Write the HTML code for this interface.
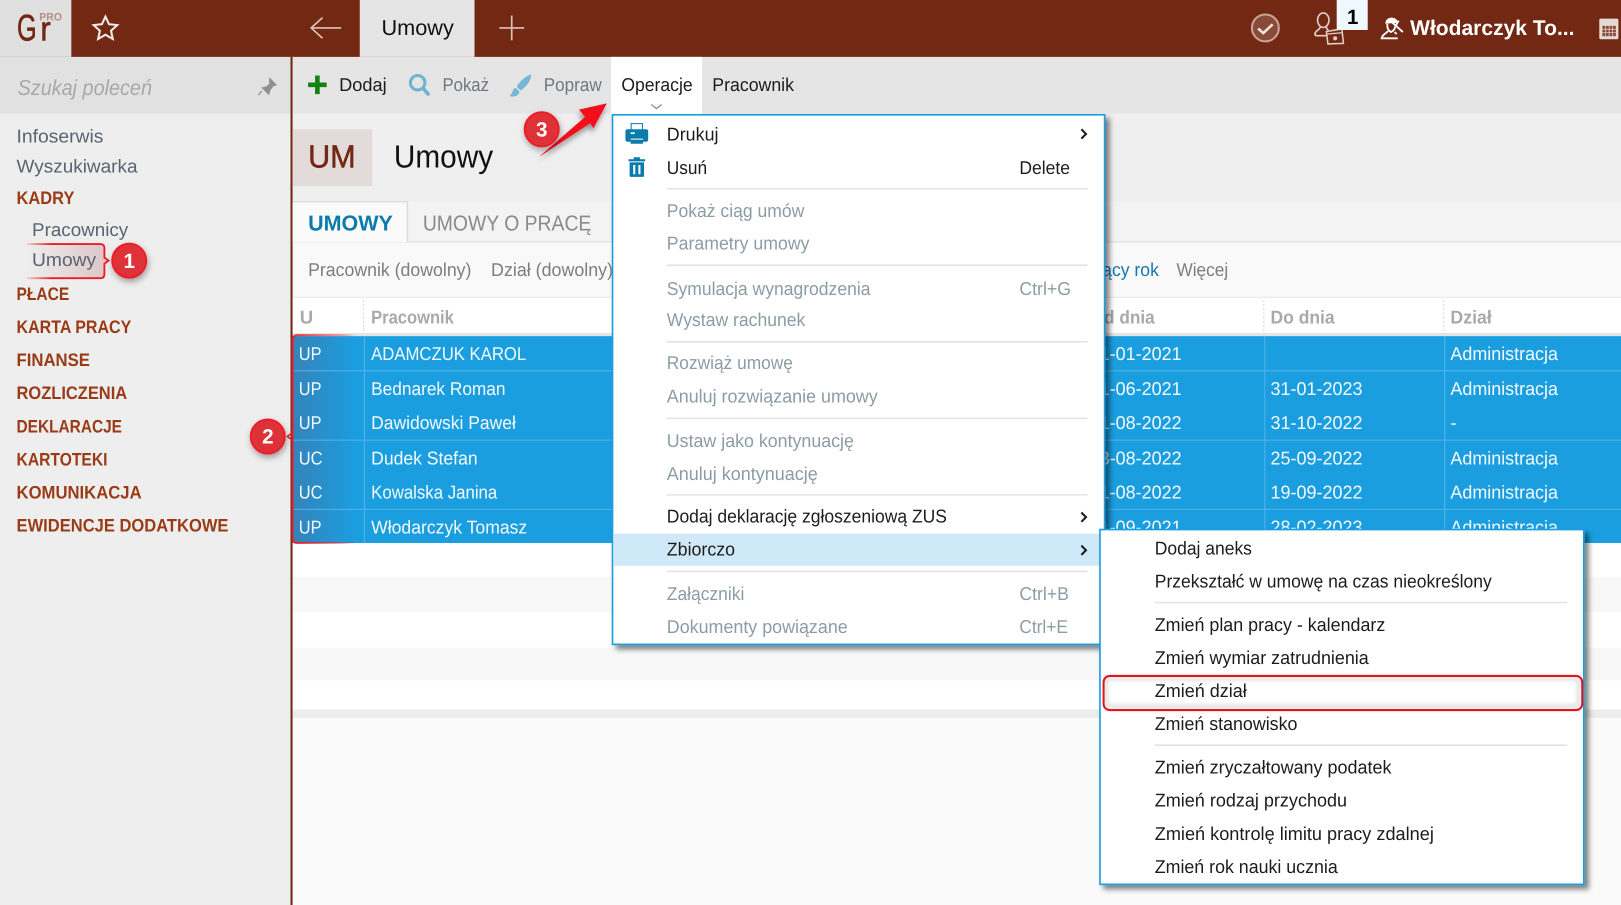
<!DOCTYPE html>
<html lang="pl"><head><meta charset="utf-8"><title>Umowy</title>
<style>
html,body{margin:0;padding:0;width:1621px;height:905px;overflow:hidden;background:#fafafa}
svg{display:block;font-family:"Liberation Sans",sans-serif;text-rendering:geometricPrecision}
text{font-size:18px;white-space:pre}
.k{fill:#1c1c1c}.g{fill:#8c9ca4}.sec{fill:#9a3b16;font-weight:700;font-size:17.5px}
.nav{fill:#5a6470}.w{fill:#f4faff}.h{fill:#a9a9a9;font-weight:700}.f{fill:#7d7d7d}
</style></head><body>
<svg width="1621" height="905" viewBox="0 0 1568 875" preserveAspectRatio="none" xmlns="http://www.w3.org/2000/svg">
<defs>
<filter id="sh" x="-10%" y="-10%" width="120%" height="120%"><feDropShadow dx="4" dy="4" stdDeviation="2.5" flood-color="#000" flood-opacity=".5"/></filter>
<filter id="bs" x="-40%" y="-40%" width="180%" height="180%"><feDropShadow dx="1" dy="3" stdDeviation="3" flood-color="#000" flood-opacity=".35"/></filter>
<filter id="as" x="-30%" y="-30%" width="160%" height="160%"><feDropShadow dx="-1" dy="4" stdDeviation="2.5" flood-color="#000" flood-opacity=".4"/></filter>
<filter id="bl" x="-5%" y="-30%" width="110%" height="160%"><feGaussianBlur stdDeviation="2"/></filter>
<linearGradient id="fade2" x1="0" x2="1" y1="0" y2="0"><stop offset="0" stop-color="#5c5a80" stop-opacity=".4"/><stop offset="1" stop-color="#5c5a80" stop-opacity="0"/></linearGradient>
<linearGradient id="fadeR" x1="0" x2="1" y1="0" y2="0"><stop offset="0" stop-color="#ee1c25" stop-opacity=".9"/><stop offset=".75" stop-color="#ee1c25" stop-opacity=".4"/><stop offset="1" stop-color="#ee1c25" stop-opacity="0"/></linearGradient>
<linearGradient id="fade1" x1="1" x2="0" y1="0" y2="0"><stop offset="0" stop-color="#dcc4c6"/><stop offset="1" stop-color="#eee"/></linearGradient>
<linearGradient id="fade1b" x1="1" x2="0" y1="0" y2="0"><stop offset="0" stop-color="#ee1c25"/><stop offset=".7" stop-color="#ee1c25"/><stop offset="1" stop-color="#ee1c25" stop-opacity=".15"/></linearGradient>
</defs>

<!-- base -->
<rect width="1568" height="875" fill="#fafafa"/>
<rect x="0" y="55" width="282" height="820" fill="#eeeeee"/>
<rect x="0" y="55" width="282" height="55" fill="#e1e1e1"/>
<rect x="283" y="55" width="1285" height="55" fill="#e5e5e5"/>
<rect x="283" y="110" width="1285" height="85" fill="#efefef"/>
<rect x="283" y="195" width="1285" height="38" fill="#f3f3f3"/>
<rect x="283" y="233" width="1285" height="55" fill="#f9f9f9"/>
<rect x="283" y="233" width="1285" height="1.5" fill="#e3e3e3"/>
<rect x="283" y="287" width="1285" height="1.5" fill="#e8e8e8"/>
<rect x="283" y="288" width="1285" height="400" fill="#fff"/>
<rect x="283" y="322" width="1285" height="3" fill="#e4e4e4"/>
<rect x="283" y="558" width="1285" height="34" fill="#f8f8f8"/>
<rect x="283" y="626" width="1285" height="32" fill="#f8f8f8"/>
<rect x="283" y="686" width="1285" height="8" fill="#ececec"/>
<rect x="281" y="55" width="2" height="820" fill="#722813"/>

<!-- top bar -->
<rect width="1568" height="55" fill="#722813"/>
<rect width="69" height="55" fill="#e0e0e0"/>
<text x="16.500" y="39" textLength="19" lengthAdjust="spacingAndGlyphs" fill="#722813" stroke="#722813" stroke-width=".6" style="font-size:36px">G</text>
<text x="39" y="39" textLength="10" lengthAdjust="spacingAndGlyphs" fill="#722813" stroke="#722813" stroke-width=".6" style="font-size:33px">r</text>
<text x="38" y="20" textLength="22" lengthAdjust="spacingAndGlyphs" fill="#b58f84" style="font-size:10.5px;font-weight:700">PRO</text>
<path d="M102 16l3.4 7.4 8 .9-6 5.4 1.7 8-7.1-4.1-7.1 4.1 1.7-8-6-5.4 8-.9z" fill="none" stroke="#f3e9e6" stroke-width="2"/>
<path d="M330 27H301M312 17L301 27l11 10" fill="none" stroke="#d9c2bb" stroke-width="1.6"/>
<rect x="348" width="111" height="55" fill="#e5e5e5"/>
<text x="369" y="34" textLength="70" lengthAdjust="spacingAndGlyphs" fill="#111" style="font-size:21px">Umowy</text>
<path d="M495 15v24M483 27h24" stroke="#d9c2bb" stroke-width="1.6" fill="none"/>
<!-- right icons -->
<circle cx="1224" cy="27" r="13" fill="#8a4a38" stroke="#c9a399" stroke-width="2"/>
<path d="M1217 27.5l5 4.5 9-8.5" fill="none" stroke="#eee1dd" stroke-width="2.6"/>
<ellipse cx="1280" cy="19.500" rx="5.500" ry="7" fill="none" stroke="#e2cec8" stroke-width="1.600"/>
<path d="M1277 26c0 3-5 3.500-5 7q0 1.500 1.500 1.500H1284M1283 26q0 2 2 3" fill="none" stroke="#e2cec8" stroke-width="1.600"/>
<path d="M1283 30.500l15-2.500 1.500 14-15 .5z" fill="#722813" stroke="#e2cec8" stroke-width="1.500"/>
<path d="M1283.500 33l15.500-1.500" stroke="#e2cec8" stroke-width="1.200" fill="none"/>
<circle cx="1291.500" cy="37" r="2" fill="#e2cec8"/>
<rect x="1293" y="0" width="30" height="29" fill="#eff8fe"/>
<text x="1303" y="23" textLength="11" lengthAdjust="spacingAndGlyphs" fill="#000" style="font-size:20px;font-weight:700">1</text>
<path d="M1340 23c0-4 3-6 6-6s6 2 6.500 5z" fill="#fff"/>
<path d="M1342 23c-.5 5 1.500 7 3.500 8 2.500-1 4.500-3.500 4.500-8M1342.500 30c-1 2.500-5 2.500-6 7h15.500M1349 31l2 2M1347 22l10 9M1353 20l-3 5" fill="none" stroke="#fff" stroke-width="1.800"/>
<text x="1364" y="34" textLength="159" lengthAdjust="spacingAndGlyphs" fill="#fff" style="font-size:20.500px;font-weight:700">Włodarczyk To...</text>
<rect x="1547" y="18" width="18.500" height="20" rx="1.500" fill="#e5d9d5"/>
<rect x="1550" y="25" width="13" height="10" fill="#8a4a38"/>
<path d="M1553.200 25v10M1556.500 25v10M1559.800 25v10M1550 28.300h13M1550 31.600h13" stroke="#e5d9d5" stroke-width=".7" fill="none"/>

<!-- sidebar -->
<text x="17" y="92" textLength="130" lengthAdjust="spacingAndGlyphs" fill="#a8a8a8" style="font-size:21px;font-style:italic">Szukaj poleceń</text>
<path d="M261 76l6 6-3 1-3 4-1 4-6-6 4-1 3-3zM253 88l-3 4" fill="#8f8f8f" stroke="#8f8f8f" stroke-width="1.200"/>
<text class="nav" x="16" y="138" textLength="84" lengthAdjust="spacingAndGlyphs">Infoserwis</text>
<text class="nav" x="16" y="167" textLength="117" lengthAdjust="spacingAndGlyphs">Wyszukiwarka</text>
<text class="sec" x="16" y="197" textLength="56" lengthAdjust="spacingAndGlyphs">KADRY</text>
<text class="nav" x="31" y="228" textLength="93" lengthAdjust="spacingAndGlyphs">Pracownicy</text>
<path d="M26 236H97q4 0 4 4v9l4 3-4 3v10q0 4-4 4H26z" fill="url(#fade1)"/>
<path d="M26 236H97q4 0 4 4v9l4 3-4 3v10q0 4-4 4H26" fill="none" stroke="url(#fade1b)" stroke-width="1.800"/>
<text class="nav" x="31" y="257" textLength="62" lengthAdjust="spacingAndGlyphs">Umowy</text>
<text class="sec" x="16" y="290" textLength="51" lengthAdjust="spacingAndGlyphs">PŁACE</text>
<text class="sec" x="16" y="322" textLength="111" lengthAdjust="spacingAndGlyphs">KARTA PRACY</text>
<text class="sec" x="16" y="354" textLength="71" lengthAdjust="spacingAndGlyphs">FINANSE</text>
<text class="sec" x="16" y="386" textLength="107" lengthAdjust="spacingAndGlyphs">ROZLICZENIA</text>
<text class="sec" x="16" y="418" textLength="102" lengthAdjust="spacingAndGlyphs">DEKLARACJE</text>
<text class="sec" x="16" y="450" textLength="88" lengthAdjust="spacingAndGlyphs">KARTOTEKI</text>
<text class="sec" x="16" y="482" textLength="121" lengthAdjust="spacingAndGlyphs">KOMUNIKACJA</text>
<text class="sec" x="16" y="514" textLength="205" lengthAdjust="spacingAndGlyphs">EWIDENCJE DODATKOWE</text>

<!-- toolbar -->
<path d="M307 73v18M298 82h18" stroke="#148214" stroke-width="4.500" fill="none"/>
<text x="328" y="88" textLength="46" lengthAdjust="spacingAndGlyphs" fill="#1c1c1c">Dodaj</text>
<circle cx="404" cy="80" r="7" fill="none" stroke="#6fb4d2" stroke-width="3"/>
<path d="M409 85l6 7" stroke="#6fb4d2" stroke-width="3.500"/>
<text x="428" y="88" textLength="45" lengthAdjust="spacingAndGlyphs" fill="#6f7780">Pokaż</text>
<path d="M514 72c-5 1-12 7-14 12l3.500 3.500c5-3 10-9 10.500-15.500zM499 85c-3 1-3 3-3.500 4.500l-2.500 3.500c4 1 9 0 9.500-4.500z" fill="#74b7d6"/>
<text x="526" y="88" textLength="56" lengthAdjust="spacingAndGlyphs" fill="#6f7780">Popraw</text>
<rect x="591" y="55" width="88" height="56" fill="#fff"/>
<text x="601" y="88" textLength="69" lengthAdjust="spacingAndGlyphs" fill="#1c1c1c">Operacje</text>
<path d="M630 101l5 4 5-4" fill="none" stroke="#8a8a8a" stroke-width="1.200"/>
<text x="689" y="88" textLength="79" lengthAdjust="spacingAndGlyphs" fill="#1c1c1c">Pracownik</text>

<!-- heading -->
<rect x="283" y="125" width="77" height="55" fill="#e2dbd9"/>
<text x="298" y="162" textLength="46" lengthAdjust="spacingAndGlyphs" fill="#722813" stroke="#722813" stroke-width=".5" style="font-size:31px">UM</text>
<text x="381" y="162" textLength="96" lengthAdjust="spacingAndGlyphs" fill="#111" style="font-size:31px">Umowy</text>

<!-- tabs -->
<rect x="283" y="195" width="111" height="39" fill="#fafafa"/>
<path d="M283 195H394V234" fill="none" stroke="#dedede" stroke-width="1.500"/>
<text x="298" y="223" textLength="82" lengthAdjust="spacingAndGlyphs" fill="#0b7bab" style="font-size:21px;font-weight:700">UMOWY</text>
<text x="409" y="223" textLength="163" lengthAdjust="spacingAndGlyphs" fill="#8a8a8a" style="font-size:21px">UMOWY O PRACĘ</text>

<!-- filter -->
<text class="f" x="298" y="267" textLength="158" lengthAdjust="spacingAndGlyphs">Pracownik (dowolny)</text>
<text class="f" x="475" y="267" textLength="118" lengthAdjust="spacingAndGlyphs">Dział (dowolny)</text>
<text x="1033" y="267" textLength="88" lengthAdjust="spacingAndGlyphs" fill="#1477b0">Bieżący rok</text>
<text class="f" x="1138" y="267" textLength="50" lengthAdjust="spacingAndGlyphs">Więcej</text>

<!-- grid header -->
<text class="h" x="290" y="313">U</text>
<text class="h" x="359" y="313" textLength="80" lengthAdjust="spacingAndGlyphs">Pracownik</text>
<text class="h" x="1055" y="313" textLength="62" lengthAdjust="spacingAndGlyphs">Od dnia</text>
<text class="h" x="1229" y="313" textLength="62" lengthAdjust="spacingAndGlyphs">Do dnia</text>
<text class="h" x="1403" y="313" textLength="40" lengthAdjust="spacingAndGlyphs">Dział</text>
<path d="M351.500 290v32M1222.500 290v32M1396.500 290v32" stroke="#d6d6d6" stroke-dasharray="2 2" fill="none"/>

<!-- rows -->
<rect x="283" y="325" width="1285" height="200" fill="#1b9ee0"/>
<rect x="283" y="325" width="62" height="200" fill="url(#fade2)"/>
<path d="M283 358.500H1568M283 425.500H1568M283 492.500H1568M352.500 325V525M1223.500 325V525M1397.500 325V525" stroke="#52b4e8" stroke-width="1" fill="none"/>
<g class="rows">
<text class="w" x="289" y="348" textLength="22" lengthAdjust="spacingAndGlyphs">UP</text>
<text class="w" x="289" y="382" textLength="22" lengthAdjust="spacingAndGlyphs">UP</text>
<text class="w" x="289" y="415" textLength="22" lengthAdjust="spacingAndGlyphs">UP</text>
<text class="w" x="289" y="449" textLength="23" lengthAdjust="spacingAndGlyphs">UC</text>
<text class="w" x="289" y="482" textLength="23" lengthAdjust="spacingAndGlyphs">UC</text>
<text class="w" x="289" y="516" textLength="22" lengthAdjust="spacingAndGlyphs">UP</text>
<text class="w" x="359" y="348" textLength="150" lengthAdjust="spacingAndGlyphs">ADAMCZUK KAROL</text>
<text class="w" x="359" y="382" textLength="130" lengthAdjust="spacingAndGlyphs">Bednarek Roman</text>
<text class="w" x="359" y="415" textLength="140" lengthAdjust="spacingAndGlyphs">Dawidowski Paweł</text>
<text class="w" x="359" y="449" textLength="103" lengthAdjust="spacingAndGlyphs">Dudek Stefan</text>
<text class="w" x="359" y="482" textLength="122" lengthAdjust="spacingAndGlyphs">Kowalska Janina</text>
<text class="w" x="359" y="516" textLength="151" lengthAdjust="spacingAndGlyphs">Włodarczyk Tomasz</text>
<text class="w" x="1054" y="348" textLength="89" lengthAdjust="spacingAndGlyphs">01-01-2021</text>
<text class="w" x="1054" y="382" textLength="89" lengthAdjust="spacingAndGlyphs">01-06-2021</text>
<text class="w" x="1054" y="415" textLength="89" lengthAdjust="spacingAndGlyphs">01-08-2022</text>
<text class="w" x="1054" y="449" textLength="89" lengthAdjust="spacingAndGlyphs">03-08-2022</text>
<text class="w" x="1054" y="482" textLength="89" lengthAdjust="spacingAndGlyphs">01-08-2022</text>
<text class="w" x="1054" y="516" textLength="89" lengthAdjust="spacingAndGlyphs">01-09-2021</text>
<text class="w" x="1229" y="382" textLength="89" lengthAdjust="spacingAndGlyphs">31-01-2023</text>
<text class="w" x="1229" y="415" textLength="89" lengthAdjust="spacingAndGlyphs">31-10-2022</text>
<text class="w" x="1229" y="449" textLength="89" lengthAdjust="spacingAndGlyphs">25-09-2022</text>
<text class="w" x="1229" y="482" textLength="89" lengthAdjust="spacingAndGlyphs">19-09-2022</text>
<text class="w" x="1229" y="516" textLength="89" lengthAdjust="spacingAndGlyphs">28-02-2023</text>
<text class="w" x="1403" y="348" textLength="104" lengthAdjust="spacingAndGlyphs">Administracja</text>
<text class="w" x="1403" y="382" textLength="104" lengthAdjust="spacingAndGlyphs">Administracja</text>
<text class="w" x="1403" y="415">-</text>
<text class="w" x="1403" y="449" textLength="104" lengthAdjust="spacingAndGlyphs">Administracja</text>
<text class="w" x="1403" y="482" textLength="104" lengthAdjust="spacingAndGlyphs">Administracja</text>
<text class="w" x="1403" y="516" textLength="104" lengthAdjust="spacingAndGlyphs">Administracja</text>
</g>
<!-- red selection 2 -->
<path d="M345 324H288q-5 0-5 5V520q0 5 5 5H345" fill="none" stroke="url(#fadeR)" stroke-width="2"/>
<path d="M283 418l-5 4 5 4" fill="none" stroke="#ee1c25" stroke-width="1.500"/>

<!-- main menu -->
<rect x="592.500" y="111" width="476" height="512" fill="#fff" stroke="#1b9ee0" stroke-width="1.600" filter="url(#sh)"/>
<path d="M607 125h3v-6h12v6h3q2 0 2 2v8q0 2-2 2h-3v-3h-12v3h-3q-2 0-2-2v-8q0-2 2-2zM611 120v5h10v-5zM610 135v4h12v-4zM610 128v1.500h4V128z" fill="#0b7bab" fill-rule="evenodd"/>
<path d="M608 154h16v2h-16zM613 152h6v2h-6zM609 157h14v13q0 1-1 1h-12q-1 0-1-1zM612.500 159.500v9h2v-9zM617.500 159.500v9h2v-9z" fill="#0b7bab" fill-rule="evenodd"/>
<g>
<text class="k" x="645" y="136" textLength="50" lengthAdjust="spacingAndGlyphs">Drukuj</text>
<text class="k" x="645" y="168" textLength="39" lengthAdjust="spacingAndGlyphs">Usuń</text>
<text class="k" x="986" y="168" textLength="49" lengthAdjust="spacingAndGlyphs">Delete</text>
<text class="g" x="645" y="210" textLength="133" lengthAdjust="spacingAndGlyphs">Pokaż ciąg umów</text>
<text class="g" x="645" y="241" textLength="138" lengthAdjust="spacingAndGlyphs">Parametry umowy</text>
<text class="g" x="645" y="285" textLength="197" lengthAdjust="spacingAndGlyphs">Symulacja wynagrodzenia</text>
<text class="g" x="986" y="285" textLength="50" lengthAdjust="spacingAndGlyphs">Ctrl+G</text>
<text class="g" x="645" y="315" textLength="134" lengthAdjust="spacingAndGlyphs">Wystaw rachunek</text>
<text class="g" x="645" y="357" textLength="122" lengthAdjust="spacingAndGlyphs">Rozwiąż umowę</text>
<text class="g" x="645" y="389" textLength="204" lengthAdjust="spacingAndGlyphs">Anuluj rozwiązanie umowy</text>
<text class="g" x="645" y="432" textLength="181" lengthAdjust="spacingAndGlyphs">Ustaw jako kontynuację</text>
<text class="g" x="645" y="464" textLength="146" lengthAdjust="spacingAndGlyphs">Anuluj kontynuację</text>
<text class="k" x="645" y="505" textLength="271" lengthAdjust="spacingAndGlyphs">Dodaj deklarację zgłoszeniową ZUS</text>
<rect x="594" y="516" width="472" height="31" fill="#d0e9f8"/>
<text class="k" x="645" y="537" textLength="66" lengthAdjust="spacingAndGlyphs">Zbiorczo</text>
<text class="g" x="645" y="580" textLength="75" lengthAdjust="spacingAndGlyphs">Załączniki</text>
<text class="g" x="986" y="580" textLength="48" lengthAdjust="spacingAndGlyphs">Ctrl+B</text>
<text class="g" x="645" y="612" textLength="175" lengthAdjust="spacingAndGlyphs">Dokumenty powiązane</text>
<text class="g" x="986" y="612" textLength="47" lengthAdjust="spacingAndGlyphs">Ctrl+E</text>
</g>
<path d="M645 182.500H1052M645 256.500H1052M645 330.500H1052M645 404.500H1052M645 478.500H1052M645 552.500H1052" stroke="#e2e2e2" stroke-width="1.500" fill="none"/>
<path d="M1046 125l4.500 4.500-4.500 4.500M1046 495.500l4.500 4.500-4.500 4.500M1046 527.500l4.500 4.500-4.500 4.500" fill="none" stroke="#1c1c1c" stroke-width="2"/>

<!-- sub menu -->
<rect x="1064" y="512" width="468" height="343" fill="#fff" stroke="#1b9ee0" stroke-width="1.600" filter="url(#sh)"/>
<text class="k" x="1117" y="536" textLength="94" lengthAdjust="spacingAndGlyphs">Dodaj aneks</text>
<text class="k" x="1117" y="568" textLength="326" lengthAdjust="spacingAndGlyphs">Przekształć w umowę na czas nieokreślony</text>
<text class="k" x="1117" y="610" textLength="223" lengthAdjust="spacingAndGlyphs">Zmień plan pracy - kalendarz</text>
<text class="k" x="1117" y="642" textLength="207" lengthAdjust="spacingAndGlyphs">Zmień wymiar zatrudnienia</text>
<rect x="1070" y="656" width="457" height="27" rx="4" fill="none" stroke="#777" stroke-width="2.500" opacity=".35" filter="url(#bl)"/>
<text class="k" x="1117" y="674" textLength="89" lengthAdjust="spacingAndGlyphs">Zmień dział</text>
<text class="k" x="1117" y="706" textLength="138" lengthAdjust="spacingAndGlyphs">Zmień stanowisko</text>
<text class="k" x="1117" y="748" textLength="229" lengthAdjust="spacingAndGlyphs">Zmień zryczałtowany podatek</text>
<text class="k" x="1117" y="780" textLength="186" lengthAdjust="spacingAndGlyphs">Zmień rodzaj przychodu</text>
<text class="k" x="1117" y="812" textLength="270" lengthAdjust="spacingAndGlyphs">Zmień kontrolę limitu pracy zdalnej</text>
<text class="k" x="1117" y="844" textLength="177" lengthAdjust="spacingAndGlyphs">Zmień rok nauki ucznia</text>
<path d="M1117 582.500H1516M1117 720.500H1516" stroke="#e2e2e2" stroke-width="1.500" fill="none"/>
<rect x="1067.500" y="653.500" width="463" height="33" rx="6" fill="none" stroke="#e8141c" stroke-width="2"/>

<!-- arrow 3 -->
<polygon points="587,100 560,106 566,113 521,152 571,119 574,124" fill="#f5101c" filter="url(#as)"/>

<!-- badges -->
<g filter="url(#bs)">
<circle cx="125" cy="252" r="16.500" fill="#df3037" stroke="#ee1c25" stroke-width="1.800"/>
<circle cx="259" cy="422" r="16.500" fill="#df3037" stroke="#ee1c25" stroke-width="1.800"/>
<circle cx="524" cy="125" r="16.500" fill="#df3037" stroke="#ee1c25" stroke-width="1.800"/>
</g>
<text x="119.500" y="259" fill="#fff" style="font-size:20px;font-weight:700">1</text>
<text x="253.500" y="429" fill="#fff" style="font-size:20px;font-weight:700">2</text>
<text x="518.500" y="132" fill="#fff" style="font-size:20px;font-weight:700">3</text>
</svg>
</body></html>
